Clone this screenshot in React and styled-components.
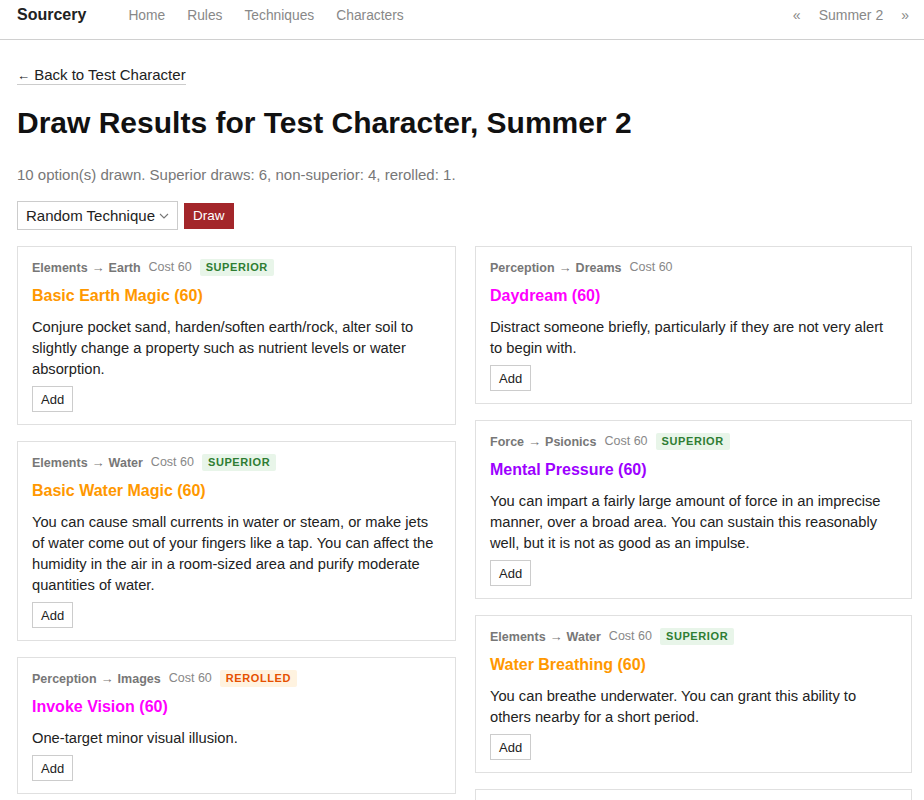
import React from "react";
import styled, { createGlobalStyle } from "styled-components";

const Global = createGlobalStyle`
  html, body { margin: 0; padding: 0; background: #fff; }
  body {
    font-family: "Liberation Sans", Arial, sans-serif;
    color: #222;
  }
  * { box-sizing: border-box; }
`;

const Nav = styled.nav`
  display: flex;
  align-items: center;
  height: 40px;
  padding: 0 15px 9px 17px;
  border-bottom: 1px solid #d0d0d0;
`;

const Brand = styled.a`
  font-size: 16px;
  font-weight: bold;
  color: #222;
  text-decoration: none;
  margin-right: 42px;
`;

const NavLinks = styled.div`
  display: flex;
  gap: 22px;
  flex: 1;
`;

const NavLink = styled.a`
  font-size: 13.8px;
  color: #888;
  text-decoration: none;
`;

const Season = styled.div`
  display: flex;
  align-items: center;
  gap: 18px;
  font-size: 14px;
  color: #888;
`;

const Main = styled.main`
  padding: 0 12px 0 17px;
`;

const BackLink = styled.a`
  display: inline-block;
  margin-top: 26px;
  font-size: 15px;
  color: #222;
  text-decoration: none;
  border-bottom: 1px solid #ccc;
  line-height: 17px;
`;

const Arrow = styled.span`
  font-size: 13px;
`;

const Title = styled.h1`
  margin: 21px 0 0;
  font-size: 30px;
  line-height: 34px;
  font-weight: bold;
  color: #111;
`;

const Summary = styled.p`
  margin: 26px 0 0;
  font-size: 15px;
  line-height: 18px;
  color: #777;
`;

const Controls = styled.form`
  display: flex;
  align-items: center;
  gap: 6px;
  margin-top: 17px;
`;

const SelectWrap = styled.div`
  position: relative;
  width: 161px;
  height: 29px;
  border: 1px solid #ccc;
  display: flex;
  align-items: center;
  padding-left: 8px;
  font-size: 15px;
  color: #222;
`;

const Chevron = styled.svg`
  position: absolute;
  right: 8px;
  top: 11px;
`;

const DrawButton = styled.button`
  height: 26px;
  padding: 0 9px;
  border: none;
  background: #a3262a;
  color: #fff;
  font-family: inherit;
  font-size: 13.5px;
`;

const Columns = styled.div`
  display: grid;
  grid-template-columns: 439px 437px;
  gap: 19px;
  margin-top: 16px;
  align-items: start;
`;

const Column = styled.div`
  display: flex;
  flex-direction: column;
  gap: 16px;
`;

const Card = styled.section`
  border: 1px solid #e0e0e0;
  padding: 11px 14px 12px 14px;
`;

const Meta = styled.div`
  display: flex;
  align-items: center;
  height: 18px;
  font-size: 12.5px;
  color: #777;
`;

const Path = styled.span`
  font-weight: bold;
  color: #777;
`;

const PathArrow = styled.span`
  font-weight: normal;
  font-size: 13px;
  margin: 0 4px;
`;

const Cost = styled.span`
  color: #888;
  margin-left: 8px;
`;

const Badge = styled.span`
  margin-left: 8px;
  padding: 2px 6px;
  font-size: 11px;
  font-weight: bold;
  letter-spacing: 0.6px;
  line-height: 13px;
  border-radius: 2px;
  color: ${(p) => (p.$kind === "rerolled" ? "#e65100" : "#2e7d32")};
  background: ${(p) => (p.$kind === "rerolled" ? "#fff3e0" : "#e8f5e9")};
`;

const Name = styled.h2`
  margin: 10px 0 0;
  font-size: 16px;
  line-height: 20px;
  font-weight: bold;
  color: ${(p) => p.$color};
`;

const Desc = styled.p`
  margin: 11px 0 0;
  font-size: 14.7px;
  line-height: 21px;
  color: #222;
`;

const AddButton = styled.button`
  display: block;
  margin-top: 6px;
  height: 26px;
  padding: 0 8px;
  background: #fff;
  border: 1px solid #ccc;
  color: #222;
  font-family: inherit;
  font-size: 13px;
`;

const COLORS = {
  elements: "#ff9800",
  perception: "#ff00ff",
  force: "#9d00ff",
};

const left = [
  {
    school: "Elements",
    branch: "Earth",
    badge: "superior",
    name: "Basic Earth Magic",
    color: COLORS.elements,
    desc: "Conjure pocket sand, harden/soften earth/rock, alter soil to slightly change a property such as nutrient levels or water absorption.",
  },
  {
    school: "Elements",
    branch: "Water",
    badge: "superior",
    name: "Basic Water Magic",
    color: COLORS.elements,
    desc: "You can cause small currents in water or steam, or make jets of water come out of your fingers like a tap. You can affect the humidity in the air in a room-sized area and purify moderate quantities of water.",
  },
  {
    school: "Perception",
    branch: "Images",
    badge: "rerolled",
    name: "Invoke Vision",
    color: COLORS.perception,
    desc: "One-target minor visual illusion.",
  },
  {
    school: "Force",
    branch: "Kinetics",
    badge: null,
    name: "Nudge",
    color: COLORS.force,
    desc: "Push a small object a short distance.",
  },
];

const right = [
  {
    school: "Perception",
    branch: "Dreams",
    badge: null,
    name: "Daydream",
    color: COLORS.perception,
    desc: "Distract someone briefly, particularly if they are not very alert to begin with.",
  },
  {
    school: "Force",
    branch: "Psionics",
    badge: "superior",
    name: "Mental Pressure",
    color: COLORS.force,
    desc: "You can impart a fairly large amount of force in an imprecise manner, over a broad area. You can sustain this reasonably well, but it is not as good as an impulse.",
  },
  {
    school: "Elements",
    branch: "Water",
    badge: "superior",
    name: "Water Breathing",
    color: COLORS.elements,
    desc: "You can breathe underwater. You can grant this ability to others nearby for a short period.",
  },
  {
    school: "Elements",
    branch: "Fire",
    badge: "superior",
    name: "Kindle",
    color: COLORS.elements,
    desc: "Light a small flame on a dry surface.",
  },
];

function OptionCard({ o }) {
  return (
    <Card>
      <Meta>
        <Path>
          {o.school}
          <PathArrow>→</PathArrow>
          {o.branch}
        </Path>
        <Cost>Cost 60</Cost>
        {o.badge && (
          <Badge $kind={o.badge}>{o.badge === "rerolled" ? "REROLLED" : "SUPERIOR"}</Badge>
        )}
      </Meta>
      <Name $color={o.color}>{o.name} (60)</Name>
      <Desc>{o.desc}</Desc>
      <AddButton type="button">Add</AddButton>
    </Card>
  );
}

export default function App() {
  return (
    <>
      <Global />
      <Nav>
        <Brand href="#">Sourcery</Brand>
        <NavLinks>
          <NavLink href="#">Home</NavLink>
          <NavLink href="#">Rules</NavLink>
          <NavLink href="#">Techniques</NavLink>
          <NavLink href="#">Characters</NavLink>
        </NavLinks>
        <Season>
          <span>«</span>
          <span>Summer 2</span>
          <span>»</span>
        </Season>
      </Nav>
      <Main>
        <BackLink href="#">
          <Arrow>←</Arrow> Back to Test Character
        </BackLink>
        <Title>Draw Results for Test Character, Summer 2</Title>
        <Summary>
          10 option(s) drawn. Superior draws: 6, non-superior: 4, rerolled: 1.
        </Summary>
        <Controls onSubmit={(e) => e.preventDefault()}>
          <SelectWrap>
            Random Technique
            <Chevron width="10" height="6" viewBox="0 0 10 6">
              <path d="M1 1 L5 5 L9 1" fill="none" stroke="#777" strokeWidth="1.1" />
            </Chevron>
          </SelectWrap>
          <DrawButton type="submit">Draw</DrawButton>
        </Controls>
        <Columns>
          <Column>
            {left.map((o, i) => (
              <OptionCard key={i} o={o} />
            ))}
          </Column>
          <Column>
            {right.map((o, i) => (
              <OptionCard key={i} o={o} />
            ))}
          </Column>
        </Columns>
      </Main>
    </>
  );
}
